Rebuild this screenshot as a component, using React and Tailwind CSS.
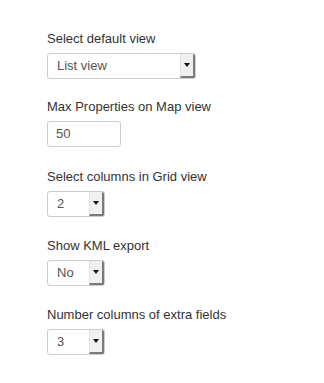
import React from "react";

const Label = ({ children }) => (
  <div className="text-[13px] leading-[20px] text-[#333]">{children}</div>
);

const Select = ({ value, width }) => (
  <div
    className={`mt-[4px] flex h-[26px] items-stretch overflow-hidden rounded-[3px] border border-[#cccccc] bg-white ${width}`}
  >
    <div className="flex flex-1 items-center pl-[9px] text-[13px] text-[#555]">
      {value}
    </div>
    <div className="flex w-[15px] items-center justify-center border-l border-[#e2e2e2] border-r-2 border-b-2 border-r-[#7a7a7a] border-b-[#7a7a7a] bg-[#f0f0f0]">
      <svg width="6" height="4" viewBox="0 0 6 4">
        <path d="M0 0 H6 L3 4 Z" fill="#111" />
      </svg>
    </div>
  </div>
);

const Field = ({ label, children, className = "" }) => (
  <div className={`flex flex-col ${className}`}>
    <Label>{label}</Label>
    {children}
  </div>
);

export default function App() {
  return (
    <div
      className="min-h-[383px] w-[324px] bg-white pl-[47px] pt-[29px]"
      style={{ fontFamily: '"Liberation Sans", Arial, sans-serif' }}
    >
      <div className="flex flex-col">
        <Field label="Select default view">
          <Select value="List view" width="w-[149px]" />
        </Field>
        <Field label="Max Properties on Map view" className="mt-[18px]">
          <div className="mt-[4px] flex h-[26px] w-[74px] items-center rounded-[3px] border border-[#cccccc] bg-white pl-[8px] text-[13px] text-[#555]">
            50
          </div>
        </Field>
        <Field label="Select columns in Grid view" className="mt-[20px]">
          <Select value="2" width="w-[58px]" />
        </Field>
        <Field label="Show KML export" className="mt-[19px]">
          <Select value="No" width="w-[58px]" />
        </Field>
        <Field label="Number columns of extra fields" className="mt-[19px]">
          <Select value="3" width="w-[58px]" />
        </Field>
      </div>
    </div>
  );
}
